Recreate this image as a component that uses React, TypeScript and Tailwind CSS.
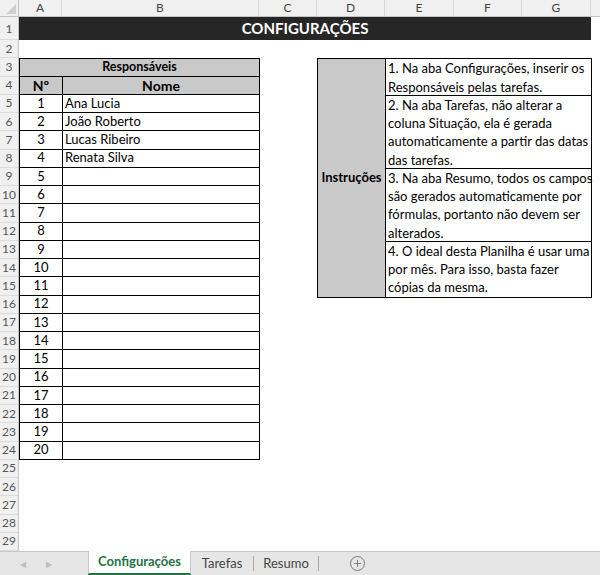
import { Plus } from 'lucide-react'

const COLUMNS = [
  { label: 'A', width: 'w-[43px]' },
  { label: 'B', width: 'w-[197px]' },
  { label: 'C', width: 'w-[58px]' },
  { label: 'D', width: 'w-[68px]' },
  { label: 'E', width: 'w-[69px]' },
  { label: 'F', width: 'w-[68px]' },
  { label: 'G', width: 'w-[69px]' },
]

const NAMES = ['Ana Lucia', 'João Roberto', 'Lucas Ribeiro', 'Renata Silva']

const INSTRUCTIONS = [
  { height: 'h-[36.5px]', lines: ['1. Na aba Configurações, inserir os', 'Responsáveis pelas tarefas.'] },
  {
    height: 'h-[73px]',
    lines: ['2. Na aba Tarefas, não alterar a', 'coluna Situação, ela é gerada', 'automaticamente a partir das datas', 'das tarefas.'],
  },
  {
    height: 'h-[73px]',
    lines: ['3. Na aba Resumo, todos os campos', 'são gerados automaticamente por', 'fórmulas, portanto não devem ser', 'alterados.'],
  },
  { height: 'h-[54.75px]', lines: ['4. O ideal desta Planilha é usar uma', 'por mês. Para isso, basta fazer', 'cópias da mesma.'] },
]

const rowNumbers = Array.from({ length: 28 }, (_, i) => i + 2)

function ColumnHeaders() {
  return (
    <div className="flex h-[17px] bg-[#f0f0f0] border-b border-[#c4c4c4] text-[12px] text-[#444]">
      <div className="w-[19px] shrink-0 border-r border-[#c4c4c4] relative">
        <div className="absolute right-[2px] bottom-[2px] w-0 h-0 border-l-[10px] border-l-transparent border-b-[10px] border-b-[#cfcfcf]" />
      </div>
      {COLUMNS.map((c) => (
        <div key={c.label} className={`${c.width} shrink-0 border-r border-[#d6d6d6] flex items-center justify-center`}>
          {c.label}
        </div>
      ))}
      <div className="flex-1" />
    </div>
  )
}

function RowHeaders() {
  return (
    <div className="w-[19px] shrink-0 bg-[#f0f0f0] border-r border-[#c4c4c4] text-[12px] text-[#555] flex flex-col">
      <div className="h-[23px] border-b border-[#dcdcdc] flex items-end justify-center pb-[1px]">1</div>
      {rowNumbers.map((n) => (
        <div key={n} className="h-[18.25px] border-b border-[#dcdcdc] flex items-center justify-center">
          {n}
        </div>
      ))}
    </div>
  )
}

function ResponsaveisTable() {
  return (
    <div className="w-[241px] shrink-0 border-l border-t border-black text-[13px] text-black">
      <div className="h-[17.25px] bg-[#c9c9c9] border-r border-b border-black flex items-center justify-center font-bold text-[12.5px]">
        Responsáveis
      </div>
      <div className="flex h-[18.25px] bg-[#c9c9c9] font-bold text-[14px]">
        <div className="w-[43px] border-r border-b border-black flex items-center justify-center">Nº</div>
        <div className="flex-1 border-r border-b border-black flex items-center justify-center">Nome</div>
      </div>
      {Array.from({ length: 20 }, (_, i) => (
        <div key={i} className="flex h-[18.25px]">
          <div className="w-[43px] border-r border-b border-black flex items-center justify-center">{i + 1}</div>
          <div className="flex-1 border-r border-b border-black flex items-center pl-[2px]">{NAMES[i] ?? ''}</div>
        </div>
      ))}
    </div>
  )
}

function Instrucoes() {
  return (
    <div className="flex w-[275px] shrink-0 border border-black text-[13px] text-black">
      <div className="w-[68px] shrink-0 bg-[#c9c9c9] border-r border-black flex items-center justify-center font-bold">
        Instruções
      </div>
      <div className="flex-1 flex flex-col">
        {INSTRUCTIONS.map((ins, idx) => (
          <div
            key={idx}
            className={`${ins.height} ${idx < INSTRUCTIONS.length - 1 ? 'border-b border-black' : ''} pl-[2px] flex flex-col`}
          >
            {ins.lines.map((l) => (
              <div key={l} className="h-[18.25px] leading-[18.25px] whitespace-nowrap">
                {l}
              </div>
            ))}
          </div>
        ))}
      </div>
    </div>
  )
}

function SheetTabs() {
  return (
    <div className="h-[24px] bg-[#e6e6e6] border-t border-[#c8c8c8] flex items-stretch text-[13px] text-[#444]">
      <div className="w-[88px] flex items-center gap-[20px] pl-[20px] text-[#bdbdbd] text-[8px]">
        <span>◀</span>
        <span>▶</span>
      </div>
      <div className="w-[103px] -mt-px bg-white border-x border-[#c8c8c8] border-b-2 border-b-[#217346] flex items-center justify-center font-bold text-[#217346]">
        Configurações
      </div>
      <div className="w-[62px] flex items-center justify-center">Tarefas</div>
      <div className="w-px my-[4px] bg-[#a8a8a8]" />
      <div className="w-[64px] flex items-center justify-center">Resumo</div>
      <div className="w-px my-[4px] bg-[#a8a8a8]" />
      <div className="w-[76px] flex items-center justify-center text-[#777]">
        <span className="w-[15px] h-[15px] rounded-full border border-[#777] flex items-center justify-center">
          <Plus size={11} strokeWidth={2} />
        </span>
      </div>
    </div>
  )
}

export default function App() {
  return (
    <div
      className="w-[600px] h-[575px] bg-white overflow-hidden flex flex-col"
      style={{ fontFamily: 'Lato, "Noto Sans", sans-serif' }}
    >
      <ColumnHeaders />
      <div className="flex h-[534px] overflow-hidden">
        <RowHeaders />
        <div className="flex-1 flex flex-col">
          <div className="w-[572px] h-[23px] bg-[#262626] text-white font-bold text-[15px] flex items-center justify-center">
            CONFIGURAÇÕES
          </div>
          <div className="h-[18.25px]" />
          <div className="flex items-start">
            <ResponsaveisTable />
            <div className="w-[57px] shrink-0" />
            <Instrucoes />
          </div>
        </div>
      </div>
      <SheetTabs />
    </div>
  )
}
